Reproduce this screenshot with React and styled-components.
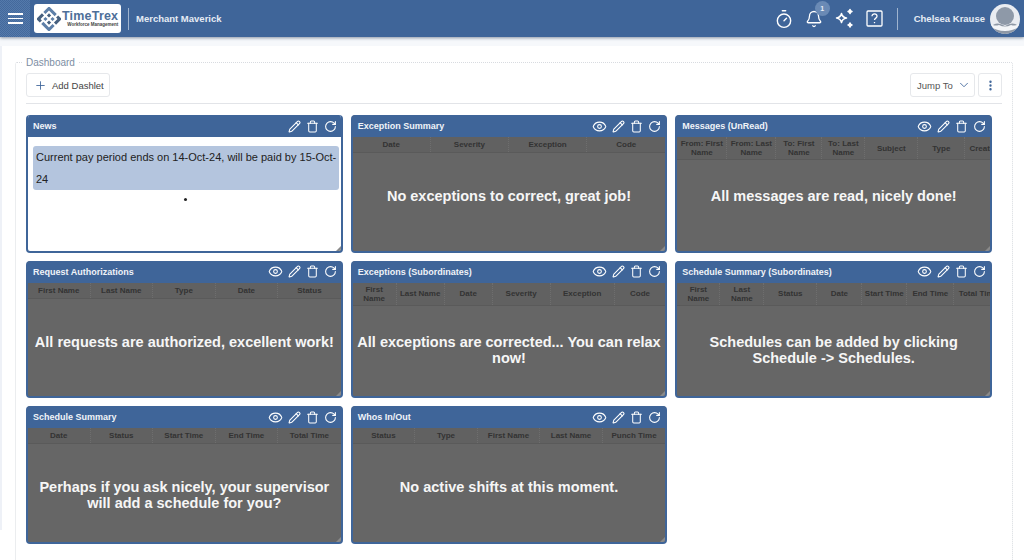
import React from 'react';
import styled, { createGlobalStyle } from 'styled-components';
import { Eye, Pencil, Trash, RotateCw, Plus, ChevronDown, EllipsisVertical, Timer, Bell } from 'lucide-react';

const GlobalStyle = createGlobalStyle`
  html, body {
    margin: 0;
    padding: 0;
    background: #fff;
    font-family: 'Liberation Sans', Arial, sans-serif;
  }
  * { box-sizing: border-box; }
`;

const dashlets = [
  { title: 'News', news: true },
  {
    title: 'Exception Summary',
    cols: '1fr 1fr 1fr 1fr',
    head: ['Date', 'Severity', 'Exception', 'Code'],
    message: 'No exceptions to correct, great job!',
  },
  {
    title: 'Messages (UnRead)',
    cols: '50px 49px 46px 43px 53px 47px 38px',
    head: ['From: First Name', 'From: Last Name', 'To: First Name', 'To: Last Name', 'Subject', 'Type', 'Created'],
    message: 'All messages are read, nicely done!',
    tall: true,
  },
  {
    title: 'Request Authorizations',
    cols: 'repeat(5, 1fr)',
    head: ['First Name', 'Last Name', 'Type', 'Date', 'Status'],
    message: 'All requests are authorized, excellent work!',
  },
  {
    title: 'Exceptions (Subordinates)',
    cols: '44px 48px 48px 58px 64px 1fr',
    head: ['First Name', 'Last Name', 'Date', 'Severity', 'Exception', 'Code'],
    message: 'All exceptions are corrected... You can relax now!',
    tall: true,
  },
  {
    title: 'Schedule Summary (Subordinates)',
    cols: '43px 44px 53px 45px 45px 47px 48px',
    head: ['First Name', 'Last Name', 'Status', 'Date', 'Start Time', 'End Time', 'Total Time'],
    message: 'Schedules can be added by clicking Schedule -> Schedules.',
    tall: true,
  },
  {
    title: 'Schedule Summary',
    cols: 'repeat(5, 1fr)',
    head: ['Date', 'Status', 'Start Time', 'End Time', 'Total Time'],
    message: 'Perhaps if you ask nicely, your supervisor will add a schedule for you?',
  },
  {
    title: 'Whos In/Out',
    cols: 'repeat(5, 1fr)',
    head: ['Status', 'Type', 'First Name', 'Last Name', 'Punch Time'],
    message: 'No active shifts at this moment.',
  },
];

function LogoMark() {
  return (
    <svg width="24" height="24" viewBox="0 0 24 24">
      <g transform="rotate(45 12 12)">
        <path d="M3 3h11v3H6v5H3z" fill="#5d7fa8" />
        <path d="M21 21H10v-3h8v-5h3z" fill="#5d7fa8" />
        <path d="M16 3h5v8h-3V6h-2z" fill="#46607f" />
        <path d="M8 21H3v-8h3v5h2z" fill="#46607f" />
        <path d="M8 8h3v3H8zM13 13h3v3h-3z" fill="#46607f" />
        <path d="M13 8h3v3h-3zM8 13h3v3H8z" fill="#5d7fa8" />
      </g>
    </svg>
  );
}

function SparkleIcon() {
  return (
    <svg width="22" height="22" viewBox="0 0 22 22" fill="none" stroke="#fff" strokeWidth="1.5" strokeLinejoin="round">
      <path d="M8.5 5.5c.6 2.8 1.7 3.900 5 4.500-3.300.6-4.400 1.700-5 4.500-.6-2.800-1.700-3.900-5-4.500 3.300-.6 4.400-1.700 5-4.500z" />
      <path d="M17 1.500c.3 1.300.8 1.800 2 2-1.200.3-1.700.8-2 2-.3-1.200-.8-1.700-2-2 1.200-.2 1.700-.7 2-2z" fill="#fff" />
      <path d="M17 15c.3 1.300.8 1.800 2 2-1.200.3-1.700.8-2 2-.3-1.200-.8-1.700-2-2 1.200-.2 1.700-.7 2-2z" fill="#fff" />
    </svg>
  );
}

function HelpIcon() {
  return (
    <svg width="17" height="17" viewBox="0 0 17 17" fill="none" stroke="#fff" strokeWidth="1.3">
      <rect x="1" y="1" width="15" height="15" rx="1" />
      <path d="M6 6.300c0-3.300 5.200-3.100 5 0 0 1.900-2.500 1.800-2.500 3.800" />
      <path d="M8.500 12v1.200" />
    </svg>
  );
}

function AvatarIcon() {
  return (
    <svg width="30" height="30" viewBox="0 0 30 30">
      <defs>
        <clipPath id="avatar-clip">
          <circle cx="15" cy="15" r="15" />
        </clipPath>
      </defs>
      <g clipPath="url(#avatar-clip)">
        <rect width="30" height="30" fill="#e9ecf1" />
        <circle cx="15" cy="12" r="9" fill="#8e99a8" />
        <path d="M0 24c5-6 9-5 15-2 6-3 10-4 15 2v6H0z" fill="#8e98a6" />
        <path d="M0 19c3 3 6 3 9 2 4 2 8 2 12 0 3 1 6 1 9-2v4c-5 2-9 4-15 4S5 25 0 23z" fill="#f3f5f8" />
      </g>
    </svg>
  );
}

function Dashlet({ data }) {
  return (
    <Card $news={data.news}>
      <CardTitle>
        <CardName>{data.title}</CardName>
        <CardTools>
          {!data.news && <Eye size={15} strokeWidth={1.7} />}
          <Pencil size={13} strokeWidth={2} />
          <Trash size={13} strokeWidth={1.9} />
          <RotateCw size={13} strokeWidth={2} />
        </CardTools>
      </CardTitle>
      {data.news ? (
        <NewsBody>
          <NewsItem>Current pay period ends on 14-Oct-24, will be paid by 15-Oct-24</NewsItem>
          <NewsDot />
        </NewsBody>
      ) : (
        <GridBody>
          <GridHead $cols={data.cols} $tall={data.tall}>
            {data.head.map((h) => (
              <HeadCell key={h}>{h}</HeadCell>
            ))}
          </GridHead>
          <Overlay>{data.message}</Overlay>
        </GridBody>
      )}
    </Card>
  );
}

export default function App() {
  return (
    <>
      <GlobalStyle />
      <Header>
        <MenuButton>
          <MenuBar />
          <MenuBar />
          <MenuBar />
        </MenuButton>
        <Logo>
          <LogoMark />
          <LogoText>
            <LogoName>TimeTrex</LogoName>
            <LogoTag>Workforce Management</LogoTag>
          </LogoText>
        </Logo>
        <Divider />
        <Company>Merchant Maverick</Company>
        <HeaderRight>
          <HeaderIcon>
            <Timer size={20} strokeWidth={1.7} />
          </HeaderIcon>
          <HeaderIcon>
            <Bell size={18} strokeWidth={1.7} />
            <Badge>1</Badge>
          </HeaderIcon>
          <HeaderIcon $wide>
            <SparkleIcon />
          </HeaderIcon>
          <HeaderIcon>
            <HelpIcon />
          </HeaderIcon>
          <Divider />
          <UserName>Chelsea Krause</UserName>
          <AvatarIcon />
        </HeaderRight>
      </Header>
      <TopStrip />
      <Body>
        <SideEdge />
        <Page>
          <Panel>
            <PanelLegend>Dashboard</PanelLegend>
            <Toolbar>
              <ToolButton>
                <Plus size={13} color="#3f6599" strokeWidth={1.6} />
                Add Dashlet
              </ToolButton>
              <ToolbarRight>
                <JumpButton>
                  Jump To
                  <ChevronDown size={14} color="#3f6599" strokeWidth={1.5} />
                </JumpButton>
                <MoreButton>
                  <EllipsisVertical size={13} color="#3f6599" strokeWidth={2.4} />
                </MoreButton>
              </ToolbarRight>
            </Toolbar>
            <Dashlets>
              {dashlets.map((d) => (
                <Dashlet key={d.title} data={d} />
              ))}
            </Dashlets>
          </Panel>
        </Page>
      </Body>
    </>
  );
}

const Header = styled.header`
  height: 37px;
  display: flex;
  align-items: center;
  background: #3f6599;
  box-shadow: 0 1px 3px rgba(30, 50, 80, 0.5);
  position: relative;
`;

const MenuButton = styled.div`
  width: 30px;
  height: 37px;
  display: flex;
  flex-direction: column;
  justify-content: center;
  align-items: center;
  gap: 3px;
  background: repeating-conic-gradient(#547aab 0 25%, #44699c 0 50%) 0 0 / 2px 2px;
  margin-right: 4px;
`;

const MenuBar = styled.span`
  width: 15px;
  height: 1.5px;
  background: #fff;
`;

const Logo = styled.div`
  width: 87px;
  height: 29px;
  display: flex;
  align-items: center;
  gap: 1px;
  padding-left: 3px;
  background: #fff;
  border-radius: 3px;
`;

const LogoText = styled.div`
  display: flex;
  flex-direction: column;
  align-items: flex-end;
`;

const LogoName = styled.span`
  font-size: 12.5px;
  line-height: 12px;
  font-weight: 700;
  letter-spacing: 0.2px;
  color: #4e6f99;
`;

const LogoTag = styled.span`
  font-size: 4.5px;
  line-height: 6px;
  font-weight: 700;
  color: #444;
  white-space: nowrap;
`;

const Divider = styled.span`
  width: 1px;
  height: 22px;
  margin: 0 7px;
  background: #9fb4cf;
`;

const Company = styled.span`
  font-size: 9.5px;
  font-weight: 700;
  color: #e6ecf4;
`;

const HeaderRight = styled.div`
  margin-left: auto;
  display: flex;
  align-items: center;
  padding-right: 4px;
`;

const HeaderIcon = styled.span`
  width: ${(p) => (p.$wide ? '31px' : '30px')};
  height: 22px;
  display: flex;
  align-items: center;
  justify-content: center;
  color: #fff;
  position: relative;
`;

const Badge = styled.span`
  position: absolute;
  top: -7px;
  right: -1px;
  width: 15px;
  height: 15px;
  border-radius: 50%;
  background: #6a8ab5;
  color: #e8eef6;
  font-size: 7px;
  font-weight: 700;
  display: flex;
  align-items: center;
  justify-content: center;
`;

const UserName = styled.span`
  margin: 0 5px 0 9px;
  font-size: 9.5px;
  font-weight: 700;
  color: #e6ecf4;
`;

const TopStrip = styled.div`
  height: 9px;
  background: #f6f8fb;
`;

const Body = styled.div`
  display: flex;
  align-items: flex-start;
  height: 514px;
  overflow: hidden;
`;

const SideEdge = styled.div`
  width: 2px;
  height: 484px;
  flex: none;
  background: #eef1f7;
`;

const Page = styled.main`
  flex: 1;
  min-width: 0;
  padding: 10px 11px 0 13px;
  background: #fff;
`;

const Panel = styled.fieldset`
  margin: 0;
  padding: 4px 10px 0 10px;
  min-width: 0;
  height: 560px;
  border: 1px dotted #d8dbe0;
  border-radius: 2px;
`;

const PanelLegend = styled.legend`
  margin-left: -3px;
  padding: 0 3px;
  font-size: 10px;
  line-height: 13px;
  color: #7d8ea3;
`;

const Toolbar = styled.div`
  height: 31px;
  display: flex;
  justify-content: space-between;
  align-items: flex-start;
  border-bottom: 1px solid #e2e4e8;
`;

const ToolbarRight = styled.div`
  display: flex;
  gap: 3px;
`;

const ToolButton = styled.div`
  width: 84px;
  height: 24px;
  display: flex;
  align-items: center;
  gap: 5px;
  padding-left: 7px;
  border: 1px solid #e6e8eb;
  border-radius: 3px;
  font-size: 9.5px;
  color: #444;
`;

const JumpButton = styled(ToolButton)`
  width: 65px;
  gap: 4px;
  padding-left: 6px;
  color: #555;
`;

const MoreButton = styled(ToolButton)`
  width: 24px;
  padding: 0;
  justify-content: center;
`;

const Dashlets = styled.div`
  display: grid;
  grid-template-columns: repeat(3, 1fr);
  grid-auto-rows: 137.6px;
  gap: 8px;
  width: 966px;
  margin-top: 11px;
`;

const Card = styled.section`
  position: relative;
  display: flex;
  flex-direction: column;
  border: 2px solid #3f6599;
  border-top-width: 0;
  border-radius: 4px;
  overflow: hidden;
  background: ${(p) => (p.$news ? '#fff' : '#666')};

  &::after {
    content: '';
    position: absolute;
    right: 0;
    bottom: 0;
    border-style: solid;
    border-width: 0 0 5px 5px;
    border-color: transparent transparent #8a8a8a transparent;
  }
`;

const CardTitle = styled.div`
  height: 22px;
  flex: none;
  display: flex;
  align-items: center;
  justify-content: space-between;
  margin: 0 -2px;
  padding: 0 6px 0 7px;
  background: #3f6599;
`;

const CardName = styled.span`
  font-size: 9px;
  font-weight: 700;
  color: #f0f3f8;
`;

const CardTools = styled.div`
  display: flex;
  align-items: center;
  gap: 5px;
  color: #fff;
`;

const NewsBody = styled.div`
  flex: 1;
  display: flex;
  flex-direction: column;
  align-items: center;
  padding: 9px 2px 0 5px;
`;

const NewsItem = styled.div`
  width: 100%;
  padding: 0 1px 0 3px;
  background: #b4c5de;
  border-radius: 3px;
  font-size: 11px;
  line-height: 22px;
  color: #222;
`;

const NewsDot = styled.span`
  width: 3px;
  height: 3px;
  margin-top: 8px;
  border-radius: 50%;
  background: #222;
`;

const GridBody = styled.div`
  position: relative;
  flex: 1;
  background: #666;
  overflow: hidden;
`;

const GridHead = styled.div`
  display: grid;
  grid-template-columns: ${(p) => p.$cols};
  width: ${(p) => (p.$cols.includes('fr') ? '100%' : 'max-content')};
  min-width: 100%;
  height: ${(p) => (p.$tall ? '23px' : '16px')};
  background: #616161;
  border-bottom: 1px solid #5a5a5a;
`;

const HeadCell = styled.div`
  display: flex;
  align-items: center;
  justify-content: center;
  padding: 0 2px;
  text-align: center;
  font-size: 8px;
  line-height: 9px;
  font-weight: 700;
  color: #333;
  border-right: 1px dotted #6e6e6e;
  overflow: hidden;

  &:last-child {
    border-right: 0;
  }
`;

const Overlay = styled.div`
  position: absolute;
  inset: 0;
  display: flex;
  justify-content: center;
  padding: 51px 4px 0;
  text-align: center;
  font-size: 14.5px;
  line-height: 16px;
  font-weight: 700;
  color: #f6f6f6;
`;
